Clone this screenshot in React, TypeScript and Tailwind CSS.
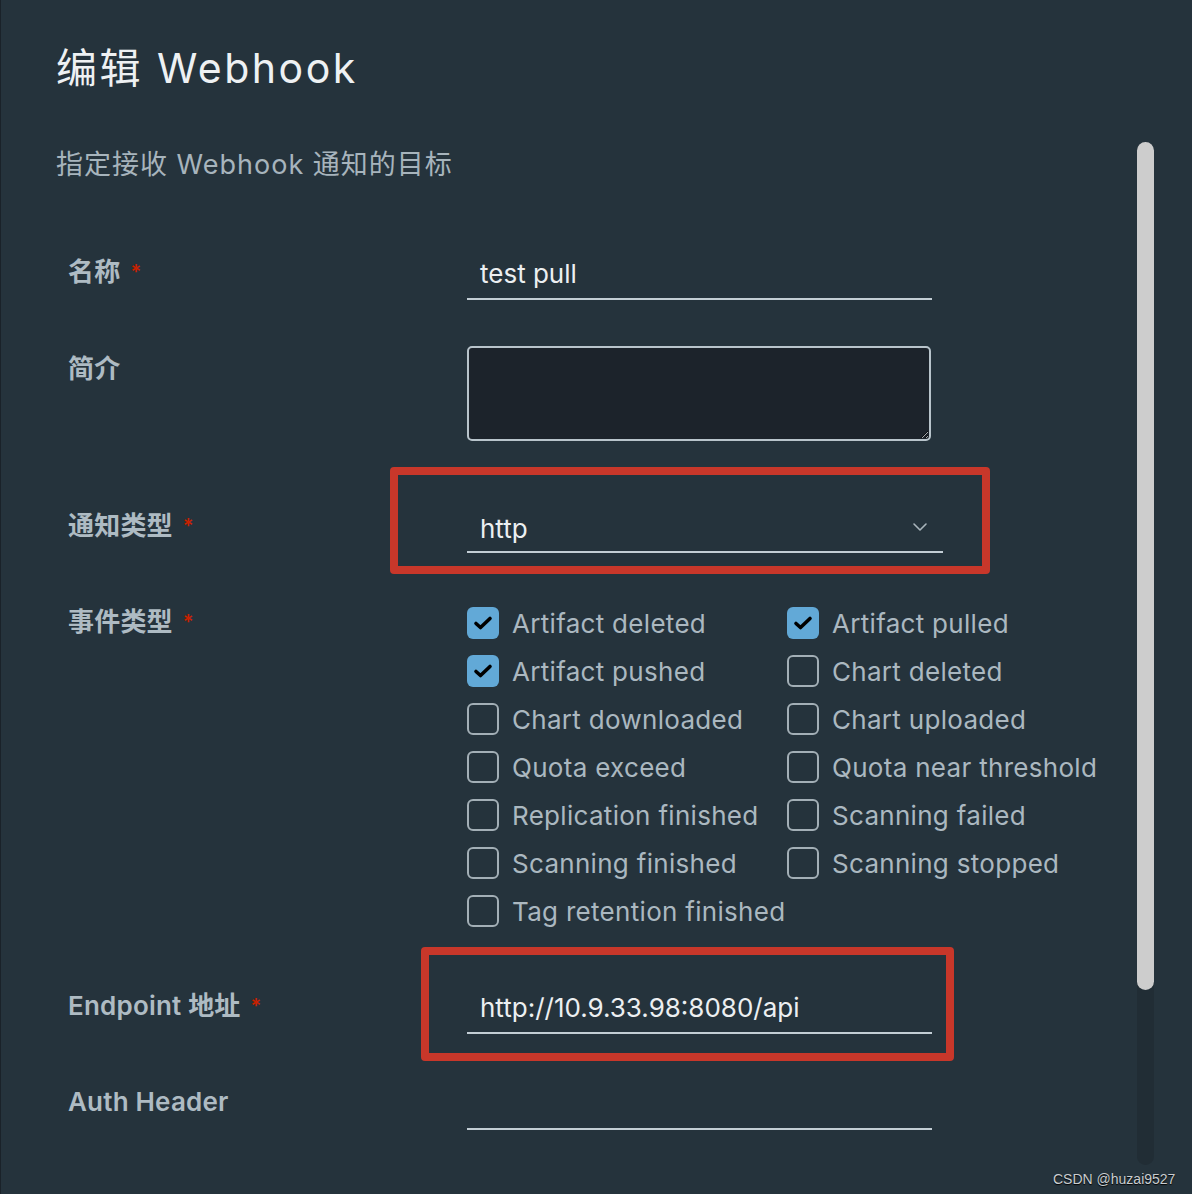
import { ChevronDown } from 'lucide-react';

const FONT = "font-['Inter','Noto_Sans_CJK_SC',sans-serif]";

const EVENTS: { label: string; checked: boolean }[] = [
  { label: 'Artifact deleted', checked: true },
  { label: 'Artifact pulled', checked: true },
  { label: 'Artifact pushed', checked: true },
  { label: 'Chart deleted', checked: false },
  { label: 'Chart downloaded', checked: false },
  { label: 'Chart uploaded', checked: false },
  { label: 'Quota exceed', checked: false },
  { label: 'Quota near threshold', checked: false },
  { label: 'Replication finished', checked: false },
  { label: 'Scanning failed', checked: false },
  { label: 'Scanning finished', checked: false },
  { label: 'Scanning stopped', checked: false },
  { label: 'Tag retention finished', checked: false },
];

function Label({ text, required, className = '' }: { text: string; required?: boolean; className?: string }) {
  return (
    <div className={`w-[399px] shrink-0 text-[26px] leading-[36px] font-semibold tracking-[0.2px] text-[#aebbc3] ${className}`}>
      {text}
      {required && <span className="ml-[10px] text-[20px] align-top text-[#c92100]">*</span>}
    </div>
  );
}

function Checkbox({ checked }: { checked: boolean }) {
  if (checked) {
    return (
      <span className="flex h-[32px] w-[32px] shrink-0 items-center justify-center rounded-[6px] bg-[#62a9d7]">
        <svg width="20" height="16" viewBox="0 0 20 16" fill="none">
          <path d="M3 8.5 L7.5 12.5 L17 3.5" stroke="#000" strokeWidth="3.6" strokeLinecap="round" strokeLinejoin="round" />
        </svg>
      </span>
    );
  }
  return <span className="h-[32px] w-[32px] shrink-0 rounded-[6px] border-2 border-[#a3afb6]" />;
}

export default function App() {
  return (
    <div className={`relative h-[1194px] w-[1192px] overflow-hidden border-l border-[#1a2229] bg-[#25333c] ${FONT}`}>
      {/* header */}
      <div className="pl-[55px] pt-[44px]">
        <h1 className="text-[41px] leading-[48px] font-normal tracking-[2.5px] text-[#eef1f3]">编辑 Webhook</h1>
        <p className="mt-[55px] text-[27px] leading-[36px] tracking-[1px] text-[#a7b4bc]">指定接收 Webhook 通知的目标</p>
      </div>

      {/* form */}
      <div className="pl-[67px]">
        <div className="mt-[67px] flex">
          <Label text="名称" required className="mt-[4px]" />
          <div className="h-[50px] w-[465px] border-b-2 border-[#c3ced5] pl-[13px] text-[26px] leading-[48px] text-[#eceff1]">
            test pull
          </div>
        </div>

        <div className="mt-[46px] flex">
          <Label text="简介" className="mt-[5px]" />
          <textarea
            className="h-[95px] w-[464px] rounded-[5px] border-2 border-[#b8c4cb] bg-[#1c232b] outline-none"
            defaultValue=""
          />
        </div>

        <div className="relative mt-[62px] flex">
          <Label text="通知类型" required className="mt-[5px]" />
          <div className="flex h-[50px] w-[476px] items-center justify-between border-b-2 border-[#c3ced5] pl-[13px] pr-[11px] text-[26px] leading-[48px] text-[#eceff1]">
            <span className="mt-[3px]">http</span>
            <ChevronDown className="h-[24px] w-[24px] text-[#a9b5bc]" strokeWidth={1.6} />
          </div>
          <div className="pointer-events-none absolute left-[322px] top-[-36px] h-[107px] w-[600px] rounded-[4px] border-[8px] border-[#c8372a]" />
        </div>

        <div className="mt-[46px] flex">
          <Label text="事件类型" required className="mt-[5px]" />
          <div className="grid w-[640px] grid-cols-[320px_320px]">
            {EVENTS.map((e) => (
              <div key={e.label} className="flex h-[48px] items-center gap-[13px]">
                <Checkbox checked={e.checked} />
                <span className="whitespace-nowrap text-[26px] tracking-[0.3px] text-[#abb8c0]">{e.label}</span>
              </div>
            ))}
          </div>
        </div>

        <div className="relative mt-[49px] flex">
          <Label text="Endpoint 地址" required className="mt-[4px]" />
          <div className="h-[50px] w-[465px] border-b-2 border-[#c3ced5] pl-[13px] text-[26px] leading-[48px] text-[#eceff1]">
            http://10.9.33.98:8080/api
          </div>
          <div className="pointer-events-none absolute left-[353px] top-[-37px] h-[114px] w-[533px] rounded-[4px] border-[8px] border-[#c8372a]" />
        </div>

        <div className="mt-[46px] flex">
          <Label text="Auth Header" className="mt-[4px]" />
          <div className="h-[50px] w-[465px] border-b-2 border-[#c3ced5]" />
        </div>
      </div>

      {/* scrollbar */}
      <div className="absolute left-[1136px] top-[142px] flex h-[1023px] w-[17px] flex-col rounded-full bg-[#212d35]">
        <div className="h-[848px] w-full rounded-full bg-[#cdcdcd]" />
      </div>

      <div className="absolute left-[1052px] top-[1169px] font-['Liberation_Sans',sans-serif] text-[14px] text-[#c9cdd0] [text-shadow:0_1px_1px_#000]">
        CSDN @huzai9527
      </div>
    </div>
  );
}
